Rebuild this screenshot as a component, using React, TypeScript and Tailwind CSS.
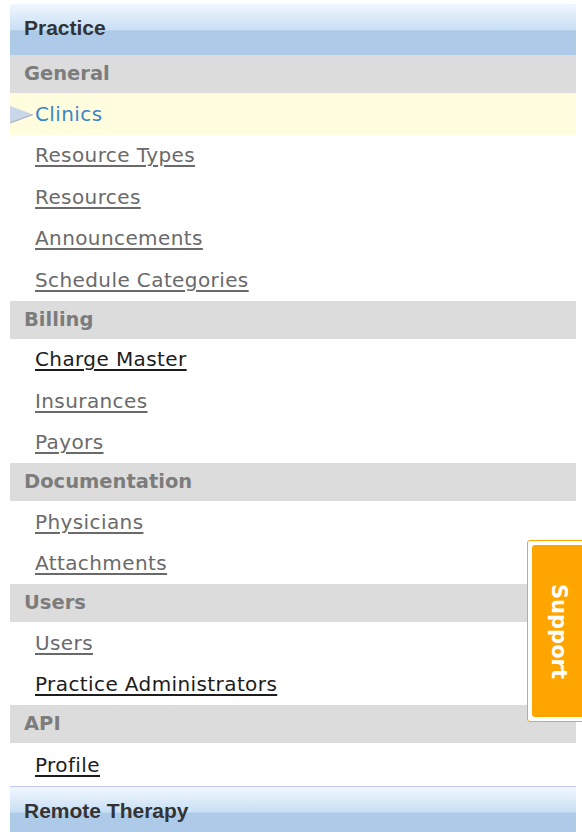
type Item = { label: string; tone: 'gray' | 'dark' | 'active' }

type Group = { title: string; items: Item[] }

const GROUPS: Group[] = [
  {
    title: 'General',
    items: [
      { label: 'Clinics', tone: 'active' },
      { label: 'Resource Types', tone: 'gray' },
      { label: 'Resources', tone: 'gray' },
      { label: 'Announcements', tone: 'gray' },
      { label: 'Schedule Categories', tone: 'gray' },
    ],
  },
  {
    title: 'Billing',
    items: [
      { label: 'Charge Master', tone: 'dark' },
      { label: 'Insurances', tone: 'gray' },
      { label: 'Payors', tone: 'gray' },
    ],
  },
  {
    title: 'Documentation',
    items: [
      { label: 'Physicians', tone: 'gray' },
      { label: 'Attachments', tone: 'gray' },
    ],
  },
  {
    title: 'Users',
    items: [
      { label: 'Users', tone: 'gray' },
      { label: 'Practice Administrators', tone: 'dark' },
    ],
  },
  {
    title: 'API',
    items: [{ label: 'Profile', tone: 'dark' }],
  },
]

const itemFont = "font-['DejaVu_Sans','Lucida_Grande',sans-serif]"

function SectionHeader({ title, border }: { title: string; border?: boolean }) {
  return (
    <div
      className={`flex h-[51px] shrink-0 items-center bg-[linear-gradient(to_bottom,#f0f7fe_0%,#c9dff4_50%,#adcbe9_53%,#adcbe9_100%)] pb-[3px] pl-[14px] font-['Liberation_Sans',Arial,sans-serif] text-[21px] font-bold text-[#333] ${
        border ? 'border-t border-[#c4c6ea]' : ''
      }`}
    >
      {title}
    </div>
  )
}

function NavRow({ item, last }: { item: Item; last: boolean }) {
  if (item.tone === 'active') {
    return (
      <div
        className={`relative flex h-[41.5px] shrink-0 items-center bg-[#fffddd] pl-[25px] text-[20px] tracking-[0.4px] ${itemFont}`}
      >
        <svg className="absolute left-0 top-[12px]" width="24" height="19" viewBox="0 0 24 19">
          <polygon points="0,1 23,9.5 0,18" fill="#c9d5e8" />
          <polyline points="0,18 23,9.5" fill="none" stroke="#a9b2c4" strokeWidth="1.2" />
        </svg>
        <span className="text-[#3b86c6]">{item.label}</span>
      </div>
    )
  }
  return (
    <div
      className={`flex shrink-0 items-center pl-[25px] text-[20px] tracking-[0.4px] ${last ? 'h-[43px]' : 'h-[41.5px]'} ${itemFont}`}
    >
      <a
        href="#"
        className={`underline underline-offset-[3px] ${item.tone === 'dark' ? 'text-[#1c1c1c]' : 'text-[#6a6a6a]'}`}
      >
        {item.label}
      </a>
    </div>
  )
}

export default function App() {
  return (
    <div className="relative h-[832px] w-[582px] overflow-hidden bg-white pl-[10px] pr-[6px] pt-[4px]">
      <div className="flex flex-col">
        <SectionHeader title="Practice" />
        {GROUPS.map((group, gi) => (
          <div key={group.title} className="flex flex-col">
            <div
              className={`flex h-[38px] shrink-0 items-center bg-[#dcdcdc] pl-[14px] text-[19.5px] font-bold text-[#7c7c7c] ${itemFont}`}
            >
              {group.title}
            </div>
            {group.items.map((item, ii) => (
              <NavRow
                key={item.label}
                item={item}
                last={gi === GROUPS.length - 1 && ii === group.items.length - 1}
              />
            ))}
          </div>
        ))}
        <SectionHeader title="Remote Therapy" border />
      </div>

      <div className="absolute left-[527px] top-[540px] h-[182px] w-[62px] rounded-[3px] border border-[#ffa500] bg-white p-[4px]">
        <div className="flex h-full w-full items-center justify-center rounded-[3px] bg-[#ffa500]">
          <span className="font-['DejaVu_Sans',sans-serif] text-[21px] font-bold text-white [writing-mode:vertical-rl]">
            Support
          </span>
        </div>
      </div>
    </div>
  )
}
